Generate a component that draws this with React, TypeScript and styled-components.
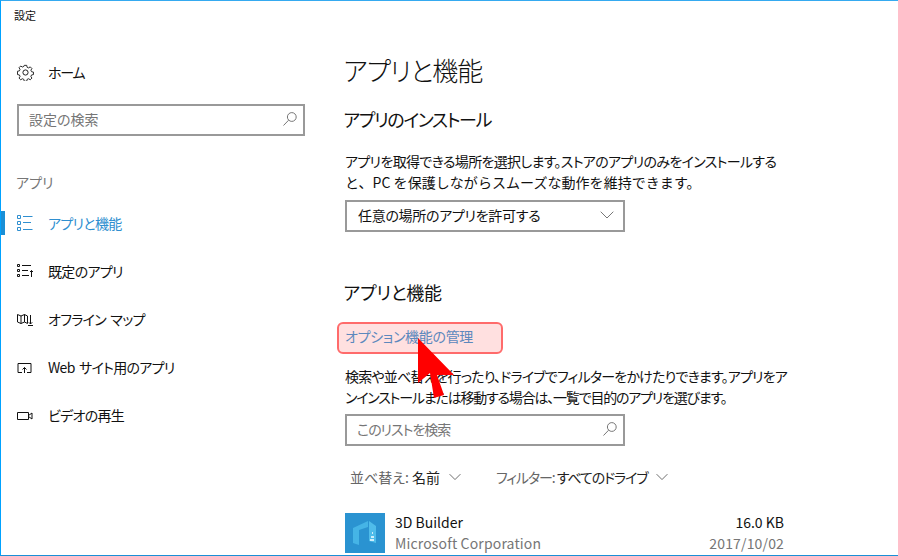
import React from "react";
import styled, { createGlobalStyle } from "styled-components";

const Global = createGlobalStyle`
  html, body { margin: 0; padding: 0; background: #fff; }
  * { box-sizing: border-box; }
  body { font-family: "Noto Sans CJK JP", "Noto Sans", sans-serif; font-feature-settings: "palt"; color: #111; }
`;

const Window = styled.div`
  width: 898px;
  height: 556px;
  overflow: hidden;
  position: relative;
  background: #fff;
  border-top: 1px solid #35aaf0;
  border-left: 1px solid #00a2ff;
  border-bottom: 1px solid #1a8fd6;
  display: flex;
  flex-direction: column;
`;
const TitleBar = styled.div`
  height: 29px;
  padding: 6px 0 0 13px;
  font-size: 11px;
  line-height: 16px;
`;
const Body = styled.div`
  display: flex;
  flex: 1;
  min-height: 0;
`;
const Side = styled.nav`
  width: 344px;
  flex: none;
  display: flex;
  flex-direction: column;
`;
const Home = styled.div`
  display: flex;
  align-items: center;
  height: 48px;
  margin-top: 19px;
  padding: 0 0 2px 16px;
  gap: 14px;
  font-size: 14px;
  letter-spacing: -1.2px;
`;
const SearchBox = styled.div<{ $w: number; $ls?: number }>`
  width: ${(p) => p.$w}px;
  height: 32px;
  border: 2px solid #999;
  display: flex;
  align-items: center;
  justify-content: space-between;
  padding: 0 5px 3px 10px;
  font-size: 14px;
  letter-spacing: ${(p) => p.$ls ?? 0}px;
  color: #767676;
`;
const SideSearch = styled(SearchBox)`
  margin: 7px 0 0 16px;
`;
const Group = styled.div`
  margin: 34px 0 0 15px;
  height: 24px;
  font-size: 14px;
  line-height: 24px;
  color: #767676;
`;
const NavList = styled.div`
  display: flex;
  flex-direction: column;
  margin-top: 5px;
`;
const NavRow = styled.div<{ $on?: boolean }>`
  position: relative;
  height: 48px;
  display: flex;
  align-items: center;
  gap: 14px;
  padding-left: 16px;
  font-size: 14px;
  letter-spacing: -0.7px;
  word-spacing: 2px;
  color: ${(p) => (p.$on ? "#2f8fd0" : "#111")};
  &::before {
    content: "";
    display: ${(p) => (p.$on ? "block" : "none")};
    position: absolute;
    left: 0;
    top: 12px;
    width: 4px;
    height: 24px;
    background: #1a8fd6;
  }
`;
const IconSlot = styled.span`
  width: 17px;
  height: 16px;
  display: flex;
  flex: none;
`;
const Main = styled.main`
  flex: 1;
  min-width: 0;
  display: flex;
  flex-direction: column;
  align-items: flex-start;
`;
const H1 = styled.h1`
  margin: 20px 0 0 -1.5px;
  height: 40px;
  font-size: 26px;
  letter-spacing: -0.9px;
  line-height: 40px;
  font-weight: 300;
`;
const H2 = styled.h2<{ $top: number; $ls: number }>`
  margin: ${(p) => p.$top}px 0 0 -1.5px;
  height: 28px;
  font-size: 18px;
  letter-spacing: ${(p) => p.$ls}px;
  line-height: 28px;
  font-weight: 400;
`;
const Para = styled.p<{ $top: number }>`
  margin: ${(p) => p.$top}px 0 0;
  font-size: 14px;
  line-height: 20.5px;
  white-space: nowrap;
`;
const ParaLine = styled.span<{ $ls: number; $fullKana?: boolean }>`
  display: block;
  letter-spacing: ${(p) => p.$ls}px;
  font-feature-settings: ${(p) => (p.$fullKana ? '"pkna"' : '"palt"')};
`;
const Select = styled.div`
  width: 280px;
  height: 32px;
  margin-top: 8px;
  border: 2px solid #999;
  display: flex;
  align-items: center;
  justify-content: space-between;
  padding: 0 9px 2px 11px;
  font-size: 14px;
  letter-spacing: -0.3px;
`;
const Link = styled.a`
  position: relative;
  display: block;
  isolation: isolate;
  margin-top: 20px;
  font-size: 14px;
  letter-spacing: -0.3px;
  line-height: 20px;
  height: 20px;
  color: #5c88bd;
  &::before {
    content: "";
    position: absolute;
    z-index: -1;
    left: -8px;
    top: -4px;
    width: 162px;
    height: 28px;
    border: 2px solid #ff6b6b;
    border-radius: 6px;
    background: #ffe0e0;
  }
`;
const ListSearch = styled(SearchBox)`
  margin-top: 7px;
`;
const Sorters = styled.div`
  display: flex;
  gap: 35px;
  margin: 21px 0 0 5px;
  height: 20px;
  font-size: 14px;
  line-height: 20px;
  color: #666;
`;
const Sorter = styled.div<{ $ls?: number }>`
  display: flex;
  align-items: center;
  gap: 9px;
  letter-spacing: ${(p) => p.$ls ?? 0}px;
`;
const Val = styled.span`
  color: #222;
`;
const AppRow = styled.div`
  display: flex;
  gap: 10px;
  width: 439px;
  margin-top: 26px;
`;
const AppIcon = styled.div`
  width: 40px;
  height: 40px;
  flex: none;
  background: #2a93d1;
`;
const AppInfo = styled.div`
  flex: 1;
  display: flex;
  flex-direction: column;
  margin-top: -1px;
  font-size: 14px;
  line-height: 21px;
`;
const AppLine = styled.div`
  display: flex;
  justify-content: space-between;
`;
const Sub = styled.span`
  color: #767676;
  letter-spacing: 0.15px;
`;
const Pointer = styled.svg`
  position: absolute;
  left: 413px;
  top: 334px;
  z-index: 2;
`;

const Gear = () => (
  <svg width="17" height="17" viewBox="0 0 17 17" fill="none" stroke="#222" strokeWidth="1">
    <circle cx="8.5" cy="8.5" r="2.6" />
    <path d="M7.2 1h2.6l.4 2 1.6.7 1.7-1.1 1.8 1.8-1.1 1.7.7 1.600 2 .4v2.600l-2 .4-.7 1.600 1.100 1.700-1.800 1.800-1.700-1.100-1.600.7-.4 2H7.200l-.4-2-1.600-.7-1.700 1.100-1.800-1.800 1.100-1.700-.7-1.600-2-.4V7.200l2-.4.7-1.600-1.100-1.700 1.800-1.800 1.700 1.100 1.600-.7z" transform="translate(.4 .4) scale(.95)" />
  </svg>
);
const Mag = () => (
  <svg width="16" height="16" viewBox="0 0 16 16" fill="none" stroke="#777" strokeWidth="1">
    <circle cx="9.800" cy="6" r="4.400" />
    <path d="M6.600 9.200 1.500 14.500" />
  </svg>
);
const Chevron = ({ w = 14, c = "#777" }: { w?: number; c?: string }) => (
  <svg width={w} height="8" viewBox="0 0 14 8" fill="none" stroke={c} strokeWidth="1">
    <path d="M.7.7 7 7l6.300-6.300" />
  </svg>
);
const ListIcon = () => (
  <svg width="17" height="16" viewBox="0 0 17 16" fill="none" stroke="currentColor" strokeWidth="1">
    <path d="M.5.5h3v3h-3zM.5 6.500h3v3h-3zM.5 12.500h3v3h-3zM6 1.500h9.500M6 7.500h8M6 14.500h9.500" />
  </svg>
);
const DefaultIcon = () => (
  <svg width="17" height="16" viewBox="0 0 17 16" fill="none" stroke="currentColor" strokeWidth="1">
    <path d="M.5 1.500h2v2h-2zM.5 6.500h2v2h-2zM.5 11.500h2v2h-2zM5 2.500h9M5 7.500h6M5 12.500h7M14.500 14V7.500M13 9l1.500-1.500L16 9" />
  </svg>
);
const MapIcon = () => (
  <svg width="17" height="16" viewBox="0 0 17 16" fill="none" stroke="currentColor" strokeWidth="1">
    <path d="M10.500 12.500 7.500 11 4 12.500.5 11V3.500L4 5 7.500 3.500 10.500 5v7.500M4 5v7.500M7.500 3.500V11M13.500 4v9M11.800 11.300l1.700 1.700 1.700-1.700M11 14.500h5" />
  </svg>
);
const WebIcon = () => (
  <svg width="17" height="16" viewBox="0 0 17 16" fill="none" stroke="currentColor" strokeWidth="1">
    <path d="M5 13.500H1v-9h13v9h-4M7.500 14V8.500M5.500 10.500l2-2 2 2" />
  </svg>
);
const VideoIcon = () => (
  <svg width="17" height="16" viewBox="0 0 17 16" fill="none" stroke="currentColor" strokeWidth="1">
    <path d="M.5 5.500h11v7H.500zM11.500 8.500 15 6v6l-3.500-2.500" />
  </svg>
);

const nav = [
  { label: "アプリと機能", icon: <ListIcon />, on: true },
  { label: "既定のアプリ", icon: <DefaultIcon /> },
  { label: "オフライン マップ", icon: <MapIcon /> },
  { label: "Web サイト用のアプリ", icon: <WebIcon /> },
  { label: "ビデオの再生", icon: <VideoIcon /> },
];

export default function App() {
  return (
    <>
      <Global />
      <Window>
        <TitleBar>設定</TitleBar>
        <Body>
          <Side>
            <Home>
              <Gear />
              ホーム
            </Home>
            <SideSearch $w={288}>
              設定の検索
              <Mag />
            </SideSearch>
            <Group>アプリ</Group>
            <NavList>
              {nav.map((n) => (
                <NavRow key={n.label} $on={n.on}>
                  <IconSlot>{n.icon}</IconSlot>
                  {n.label}
                </NavRow>
              ))}
            </NavList>
          </Side>
          <Main>
            <H1>アプリと機能</H1>
            <H2 $top={15} $ls={-1.4}>アプリのインストール</H2>
            <Para $top={18}>
              <ParaLine $ls={-0.66}>アプリを取得できる場所を選択します。ストアのアプリのみをインストールする</ParaLine>
              <ParaLine $ls={0.05} $fullKana>と、PC を保護しながらスムーズな動作を維持できます。</ParaLine>
            </Para>
            <Select>
              任意の場所のアプリを許可する
              <Chevron />
            </Select>
            <H2 $top={46} $ls={-0.3}>アプリと機能</H2>
            <Link>オプション機能の管理</Link>
            <Para $top={20}>
              <ParaLine $ls={-0.8}>検索や並べ替えを行ったり、ドライブでフィルターをかけたりできます。アプリをア</ParaLine>
              <ParaLine $ls={-1.2}>ンインストールまたは移動する場合は、一覧で目的のアプリを選びます。</ParaLine>
            </Para>
            <ListSearch $w={280} $ls={-1}>
              このリストを検索
              <Mag />
            </ListSearch>
            <Sorters>
              <Sorter>
                <span>
                  並べ替え: <Val>名前</Val>
                </span>
                <Chevron w={12} c="#555" />
              </Sorter>
              <Sorter $ls={-1.1}>
                <span>
                  フィルター: <Val>すべてのドライブ</Val>
                </span>
                <Chevron w={12} c="#555" />
              </Sorter>
            </Sorters>
            <AppRow>
              <AppIcon>
                <svg width="40" height="40" viewBox="0 0 40 40">
                  <path d="M8 15 23 8v6l-9 3v15l-6-2z" fill="#45b4e6" />
                  <path d="M24 8l7 5v17l-7-2z" fill="#4fbcea" />
                  <path d="M27 19h1v2h-1zM26 23h3v2h-3zM25 26h4v2h-4z" fill="#cfeefb" />
                </svg>
              </AppIcon>
              <AppInfo>
                <AppLine>
                  <span>3D Builder</span>
                  <span>16.0 KB</span>
                </AppLine>
                <AppLine>
                  <Sub>Microsoft Corporation</Sub>
                  <Sub>2017/10/02</Sub>
                </AppLine>
              </AppInfo>
            </AppRow>
          </Main>
        </Body>
        <Pointer width="46" height="66" viewBox="0 0 46 66">
          <path d="M4 3 4 48 16 38 20 63 30 60 23 40 40 40z" fill="#ff0000" />
        </Pointer>
      </Window>
    </>
  );
}
